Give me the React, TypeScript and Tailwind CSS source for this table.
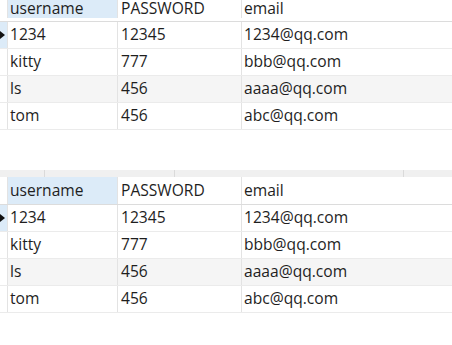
const rows = [
  { user: '1234', pwd: '12345', email: '1234@qq.com' },
  { user: 'kitty', pwd: '777', email: 'bbb@qq.com' },
  { user: 'ls', pwd: '456', email: 'aaaa@qq.com' },
  { user: 'tom', pwd: '456', email: 'abc@qq.com' },
]

function Grid({ cropped }: { cropped?: boolean }) {
  const head = cropped ? 'h-[22px] pb-[3px]' : 'h-[28px]'
  return (
    <div className="flex flex-col">
      <div className={'flex border-b border-[#dcdcdc] ' + head}>
        <div className="w-[8px] border-r border-[#e3e3e3] bg-white" />
        <div className="w-[110px] flex items-center pl-[2px] bg-[#dcebf8] border-r border-[#e3e3e3]">username</div>
        <div className="w-[124px] flex items-center pl-[3px] border-r border-[#e3e3e3]">PASSWORD</div>
        <div className="flex-1 flex items-center pl-[2px]">email</div>
      </div>
      {rows.map((r, i) => (
        <div
          key={i}
          className={'flex h-[27px] border-b border-[#ebebeb] ' + (i === 2 ? 'bg-[#f5f5f5]' : 'bg-white')}
        >
          <div
            className={
              'w-[8px] border-r border-[#e3e3e3] flex items-center ' + (i === 0 ? 'bg-[#dcebf8]' : 'bg-white')
            }
          >
            {i === 0 && (
              <svg width="6" height="8" viewBox="0 0 6 8">
                <path d="M0 0 L5 4 L0 8 Z" fill="#111" />
              </svg>
            )}
          </div>
          <div className="w-[110px] flex items-center pl-[2px] border-r border-[#e3e3e3]">{r.user}</div>
          <div className="w-[124px] flex items-center pl-[3px] border-r border-[#e3e3e3]">{r.pwd}</div>
          <div className="flex-1 flex items-center pl-[2px]">{r.email}</div>
        </div>
      ))}
    </div>
  )
}

export default function App() {
  return (
    <div className="w-[452px] h-[345px] bg-white overflow-hidden text-[15.6px] leading-none text-[#1e1e1e] font-['Open_Sans',sans-serif]">
      <Grid cropped />
      <div className="h-[40px]" />
      {/* strip left from the grid above */}
      <div className="flex h-[7px] bg-[#f0f0f0]">
        <div className="w-[45px] border-r border-[#dadada]" />
        <div className="w-[130px] border-r border-[#dadada]" />
        <div className="w-[229px] border-r border-[#dadada]" />
        <div className="flex-1" />
      </div>
      <Grid />
    </div>
  )
}
